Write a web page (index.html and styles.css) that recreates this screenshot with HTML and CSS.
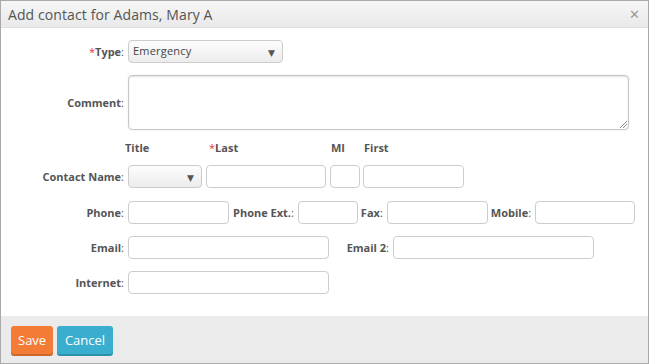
FILE: index.html
```html
<!DOCTYPE html>
<html lang="en">
<head>
  <meta charset="UTF-8" />
  <title>Add contact</title>
  <link rel="stylesheet" href="styles.css">
</head>
<body>
  <div class="dialog">
    <div class="dialog-header">
      <span class="dialog-title">Add contact for Adams, Mary A</span>
      <span class="close">&#x2715;</span>
    </div>

    <div class="dialog-body">
      <div class="row row-type">
        <label class="lbl"><span class="req">*</span>Type<span class="colon">:</span></label>
        <div class="select w-type">Emergency<span class="arrow">&#9660;</span></div>
      </div>

      <div class="row row-comment">
        <label class="lbl">Comment<span class="colon">:</span></label>
        <div class="textarea"><span class="grip"></span></div>
      </div>

      <div class="row row-heads">
        <span class="lbl"></span>
        <span class="head h-title">Title</span>
        <span class="head h-last"><span class="req">*</span>Last</span>
        <span class="head h-mi">MI</span>
        <span class="head h-first">First</span>
      </div>

      <div class="row row-name">
        <label class="lbl">Contact Name<span class="colon">:</span></label>
        <div class="select w-title"><span class="arrow">&#9660;</span></div>
        <input class="field w-last" type="text">
        <input class="field w-mi" type="text">
        <input class="field w-first" type="text">
      </div>

      <div class="row">
        <label class="lbl">Phone<span class="colon">:</span></label>
        <input class="field w-phone" type="text">
        <label class="inline-lbl">Phone Ext.<span class="colon">:</span></label>
        <input class="field w-ext" type="text">
        <label class="inline-lbl lbl-fax">Fax<span class="colon">:</span></label>
        <input class="field w-phone" type="text">
        <label class="inline-lbl lbl-mobile">Mobile<span class="colon">:</span></label>
        <input class="field w-mobile" type="text">
      </div>

      <div class="row">
        <label class="lbl">Email<span class="colon">:</span></label>
        <input class="field w-email" type="text">
        <label class="inline-lbl lbl-email2">Email 2<span class="colon">:</span></label>
        <input class="field w-email" type="text">
      </div>

      <div class="row">
        <label class="lbl">Internet<span class="colon">:</span></label>
        <input class="field w-email" type="text">
      </div>
    </div>

    <div class="dialog-footer">
      <button class="btn btn-save">Save</button>
      <button class="btn btn-cancel">Cancel</button>
    </div>
  </div>
</body>
</html>
```

FILE: styles.css
```css
* { box-sizing: border-box; }
body {
  margin: 0;
  font-family: "Open Sans", "DejaVu Sans", sans-serif;
  color: #555;
  background: #fff;
}
.dialog {
  width: 649px; height: 364px;
  border: 1px solid #aaa;
  display: flex; flex-direction: column;
  background: #fff;
}
.dialog-header {
  height: 27px; flex: none;
  display: flex; justify-content: space-between; align-items: center;
  padding: 0 8px 0 7px;
  background: linear-gradient(#f6f6f6, #e9e9e9);
  border-bottom: 1px solid #e0e0e0;
}
.dialog-title { font-size: 14px; color: #555; letter-spacing: 0.1px; }
.close { font-size: 13px; color: #999; }

.dialog-body { flex: 1; padding-top: 12px; }
.row {
  display: flex; align-items: center; gap: 4px;
  height: 23px; margin-bottom: 12px;
}
.lbl {
  width: 123px; flex: none; text-align: right;
  font-size: 11px; font-weight: 700; color: #555;
}
.colon { font-weight: 400; }
.req { color: #e33; font-weight: 400; }
.inline-lbl { font-size: 11px; font-weight: 700; color: #555; }
.lbl-fax { margin-left: -1px; }
.lbl-mobile { margin-left: -1px; }
.lbl-email2 { width: 56px; text-align: right; }

.row-comment { height: 55px; margin-bottom: 6px; }
.row-heads { margin-bottom: 6px; }
.row-name { margin-bottom: 13px; }

.head { font-size: 11px; font-weight: 700; color: #555; }
.h-title { margin-left: -3px; width: 80px; }
.h-last { width: 118px; }
.h-mi { width: 29px; }

.select {
  position: relative;
  height: 23px;
  border: 1px solid #ccc; border-radius: 4px;
  background: linear-gradient(#fdfdfd, #ececec);
  font-size: 11px; color: #444;
  padding: 2px 0 0 4px;
  letter-spacing: 0.2px;
}
.arrow {
  position: absolute; right: 7px; top: 5px;
  font-size: 9px; color: #555;
}
.w-type { width: 155px; }
.w-title { width: 74px; }

.textarea {
  position: relative;
  width: 501px; height: 55px;
  border: 1px solid #c8c8c8; border-radius: 4px;
  box-shadow: inset 0 1px 2px rgba(0,0,0,0.12), 0 0 2px rgba(0,0,0,0.1);
}
.grip {
  position: absolute; right: 1px; bottom: 1px;
  width: 7px; height: 7px;
  background: linear-gradient(135deg, transparent 45%, #888 46%, #888 52%, transparent 53%, transparent 70%, #888 71%, #888 77%, transparent 78%);
}

.field {
  height: 23px; margin: 0;
  border: 1px solid #ccc; border-radius: 4px;
  background: #fff; padding: 0 4px;
  font-family: inherit; font-size: 11px;
}
.w-last { width: 120px; }
.w-mi { width: 30px; }
.w-first { width: 101px; margin-left: -1px; }
.w-phone { width: 101px; }
.w-ext { width: 60px; }
.w-mobile { width: 100px; }
.w-email { width: 201px; }

.dialog-footer {
  height: 47px; flex: none;
  background: #ebebeb;
  display: flex; align-items: center; gap: 4px;
  padding: 0 0 0 10px;
}
.btn {
  height: 28px; border: none; border-radius: 3px;
  color: #fff; font-family: inherit; font-size: 13px;
  padding: 0 7px; cursor: pointer;
}
.btn-save { background: #f37b36; box-shadow: 0 2px 0 #c9672e; width: 42px; }
.btn-cancel { background: #39aecf; box-shadow: 0 2px 0 #2f90ab; width: 56px; }
```
